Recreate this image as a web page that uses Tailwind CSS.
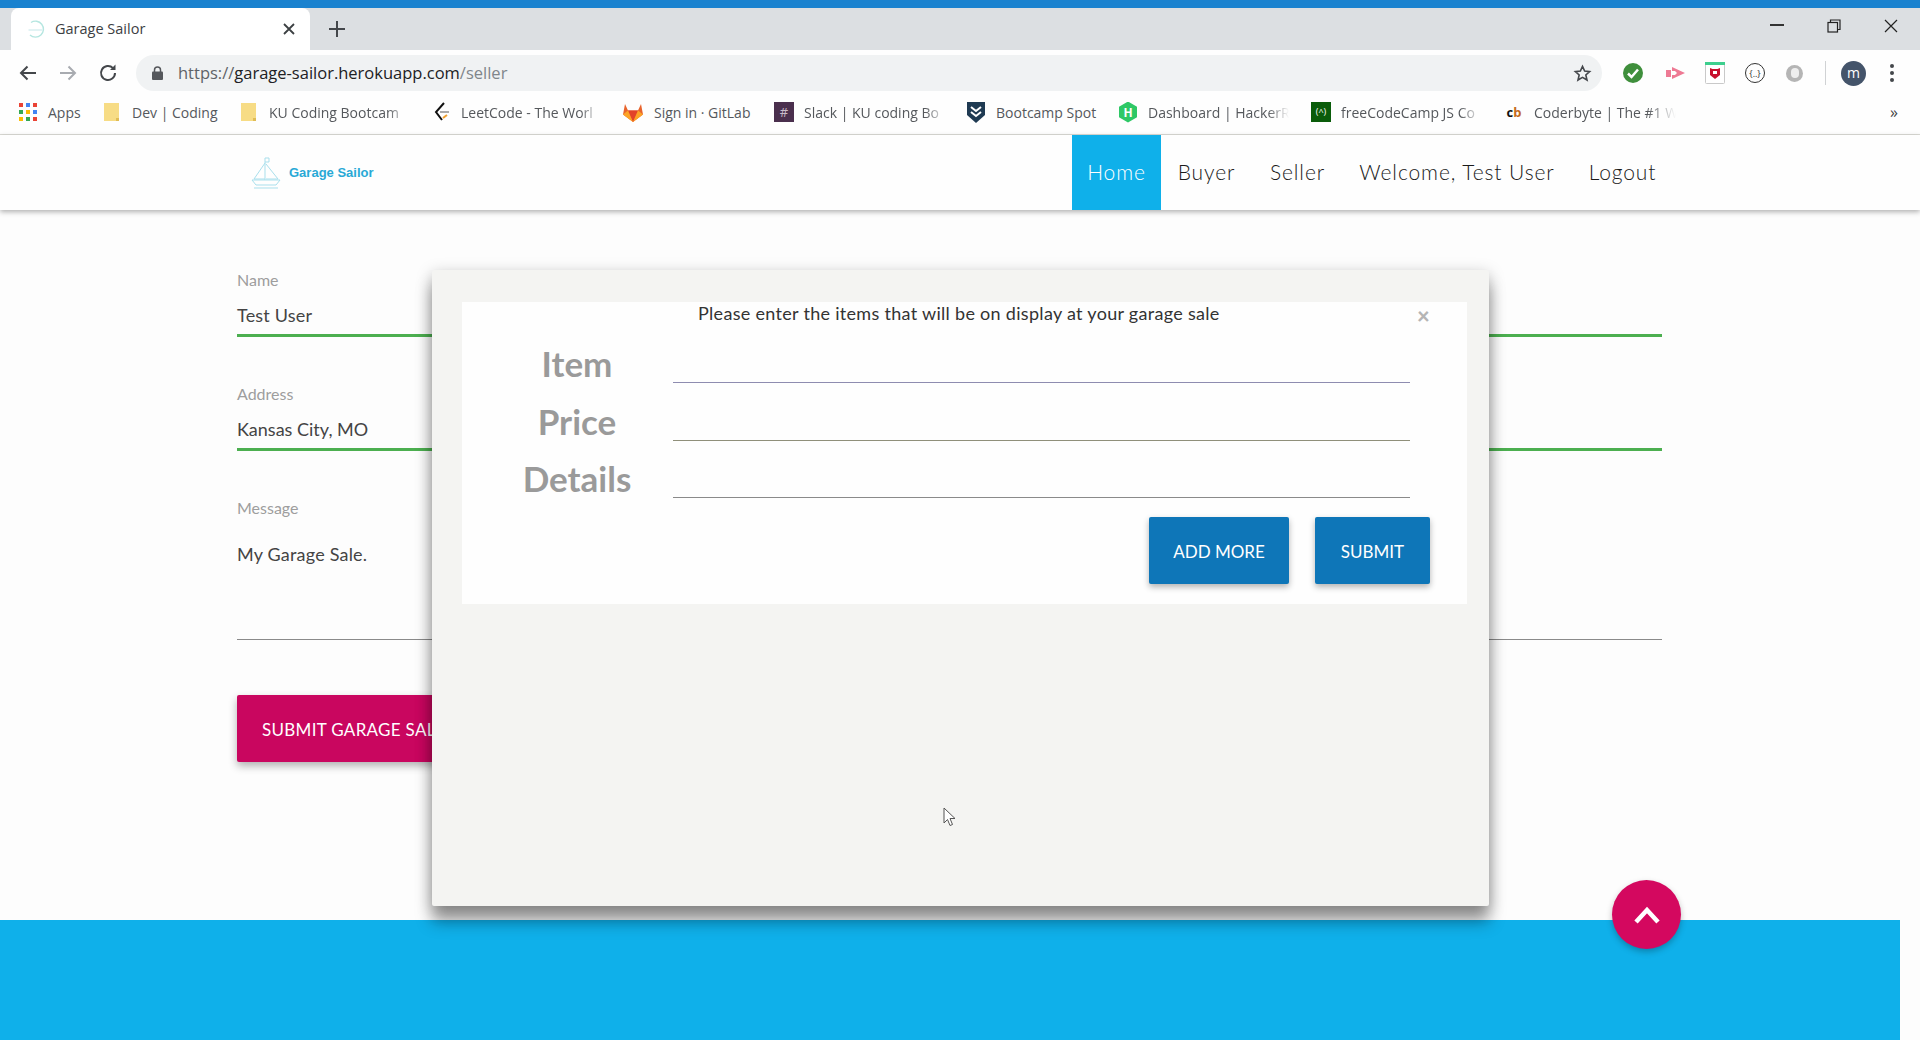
<!DOCTYPE html>
<html lang="en">
<head>
  <meta charset="UTF-8">
  <title>Garage Sailor</title>
  <script src="https://cdn.jsdelivr.net/npm/@tailwindcss/browser@4"></script>
</head>
<body class="bg-[#fdfdfd] font-['Lato','Open_Sans',sans-serif]">
<div class="relative w-[1920px] h-[1040px] overflow-hidden flex flex-col">

  <!-- browser chrome -->
  <div class="h-2 bg-[#1a82cf]"></div>
  <div class="h-[42px] bg-[#dcdfe2] flex items-end pl-[11px] font-['Open_Sans',sans-serif]">
    <div class="w-[299px] h-[42px] bg-white rounded-t-lg flex items-center pl-[15px] pr-[14px]">
      <svg class="w-[20px] h-[20px]" viewBox="0 0 20 20" fill="none" stroke="#b5e6e0" stroke-width="1.4"><path d="M5 3.5a8 8 0 1 1-1 12.5"/><path d="M2.5 11h14" stroke="#d6eef0"/></svg>
      <span class="ml-[9px] text-[14.5px] text-[#3c4043]">Garage Sailor</span>
      <svg class="ml-auto w-[14px] h-[14px]" viewBox="0 0 14 14" stroke="#3c4043" stroke-width="1.8"><path d="M2 2l10 10M12 2L2 12"/></svg>
    </div>
    <svg class="ml-[18px] mb-[12px] w-[18px] h-[18px]" viewBox="0 0 18 18" stroke="#44474b" stroke-width="2"><path d="M9 1v16M1 9h16"/></svg>
    <svg class="ml-auto mb-[24px] w-[14px] h-[2px]" viewBox="0 0 14 2" stroke="#333" stroke-width="2"><path d="M0 1h14"/></svg>
    <svg class="ml-[43px] mb-[17px] w-[14px] h-[14px]" viewBox="0 0 14 14" fill="none" stroke="#222" stroke-width="1.2"><rect x="1" y="3.5" width="9.5" height="9.5"/><path d="M3.5 3.500V1h9.500v9.500h-2.500"/></svg>
    <svg class="ml-[43px] mr-[22px] mb-[17px] w-[14px] h-[14px]" viewBox="0 0 14 14" stroke="#222" stroke-width="1.2"><path d="M1 1l12 12M13 1L1 13"/></svg>
  </div>
  <div class="h-[46px] bg-[#fefefe] flex items-center pl-[18px] font-['Open_Sans',sans-serif]">
    <svg class="w-[20px] h-[20px]" viewBox="0 0 20 20" fill="none" stroke="#44474b" stroke-width="2"><path d="M18 10H3M9.500 3.500L3 10l6.500 6.500"/></svg>
    <svg class="ml-[20px] w-[20px] h-[20px]" viewBox="0 0 20 20" fill="none" stroke="#a8abb0" stroke-width="2"><path d="M2 10h15M10.500 3.500L17 10l-6.500 6.500"/></svg>
    <svg class="ml-[20px] w-[20px] h-[20px]" viewBox="0 0 20 20" fill="none" stroke="#44474b" stroke-width="2"><path d="M17 10a7 7 0 1 1-2-4.900"/><path d="M17.500 1.500v5.500h-5.500z" fill="#44474b" stroke="none"/></svg>
    <div class="ml-[18px] w-[1466px] h-[36px] bg-[#f0f2f3] rounded-full flex items-center pl-[16px] pr-[10px]">
      <svg class="w-[11px] h-[14px]" viewBox="0 0 11 14"><path d="M2.500 6V4a3 3 0 0 1 6 0v2" fill="none" stroke="#55585c" stroke-width="1.500"/><rect y="5.500" width="11" height="8.500" rx="1" fill="#55585c"/></svg>
      <span class="ml-[15px] text-[16.500px] text-[#202124]"><span class="text-[#5f6368]">https://</span>garage-sailor.herokuapp.com<span class="text-[#80868b]">/seller</span></span>
      <svg class="ml-auto w-[19px] h-[19px]" viewBox="0 0 24 24" fill="none" stroke="#44474b" stroke-width="2"><path d="M12 3l2.700 6 6.300.6-4.800 4.200 1.500 6.400L12 16.800 6.300 20.200l1.500-6.400L3 9.600 9.300 9z"/></svg>
    </div>
    <svg class="ml-[21px] w-[20px] h-[20px]" viewBox="0 0 20 20"><circle cx="10" cy="10" r="10" fill="#3f8f3c"/><path d="M5 10.500l3.500 3.500L15 6.500" fill="none" stroke="#fff" stroke-width="2.500"/></svg>
    <svg class="ml-[23px] w-[20px] h-[18px]" viewBox="0 0 20 18" fill="#ee7a94"><rect y="6" width="5" height="7"/><path d="M6 3l13 6-13 6V11h3l2-2-2-2H6z"/></svg>
    <svg class="ml-[19px] w-[20px] h-[22px]" viewBox="0 0 20 22"><rect x=".5" y=".5" width="19" height="21" rx="1" fill="#fff" stroke="#c9c9c9"/><rect width="20" height="3" fill="#3ecf8e"/><path d="M5 6l2.500 1h5L15 6v7l-5 4-5-4z" fill="#c8102e"/><path d="M8 9h4v3H8z" fill="#fff"/></svg>
    <div class="ml-[20px] w-[20px] h-[20px] rounded-full border-[1.500px] border-[#333] flex items-center justify-center text-[9px] leading-none text-[#333]">{..}</div>
    <div class="ml-[21px] w-[17px] h-[17px] rounded-full bg-[#b5b5b5] flex items-center justify-center"><div class="w-[8px] h-[10px] rounded-full bg-[#eee]"></div></div>
    <div class="ml-[22px] w-px h-[24px] bg-[#d0d2d4]"></div>
    <div class="ml-[15px] w-[25px] h-[25px] rounded-full bg-[#44546a] flex items-center justify-center text-[14px] leading-none text-white">m</div>
    <svg class="ml-[24px] w-[4px] h-[18px]" viewBox="0 0 4 18" fill="#44474b"><circle cx="2" cy="2" r="2"/><circle cx="2" cy="9" r="2"/><circle cx="2" cy="16" r="2"/></svg>
  </div>
  <div class="h-[39px] pb-[6px] bg-[#fefefe] border-b border-[#dcdcd6] flex items-center text-[14px] text-[#55585c] font-['Open_Sans',sans-serif]">
    <svg class="ml-[19px] w-[18px] h-[18px]" viewBox="0 0 18 18">
      <rect width="4" height="4" fill="#ea4335"/><rect x="7" width="4" height="4" fill="#4285f4"/><rect x="14" width="4" height="4" fill="#ea4335"/>
      <rect y="7" width="4" height="4" fill="#34a853"/><rect x="7" y="7" width="4" height="4" fill="#fbbc05"/><rect x="14" y="7" width="4" height="4" fill="#4285f4"/>
      <rect y="14" width="4" height="4" fill="#fbbc05"/><rect x="7" y="14" width="4" height="4" fill="#34a853"/><rect x="14" y="14" width="4" height="4" fill="#ea4335"/>
    </svg>
    <span class="ml-[11px] w-[56px]">Apps</span>
    <svg class="w-[15px] h-[18px]" viewBox="0 0 15 18"><path d="M0 0h15v18H0z" fill="#f7dc85"/><path d="M12 15h3v3h-3z" fill="#e0bc55"/></svg>
    <span class="ml-[13px] w-[109px]">Dev | Coding</span>
    <svg class="w-[15px] h-[18px]" viewBox="0 0 15 18"><path d="M0 0h15v18H0z" fill="#f7dc85"/><path d="M12 15h3v3h-3z" fill="#e0bc55"/></svg>
    <span class="ml-[13px] w-[140px] whitespace-nowrap [mask-image:linear-gradient(to_right,#000_85%,transparent)]">KU Coding Bootcam</span>
    <svg class="ml-[24px] w-[18px] h-[20px]" viewBox="0 0 18 20" fill="none" stroke-width="2"><path d="M11 1L3 10l6 8" stroke="#111"/><path d="M7 10h9" stroke="#aaa"/><path d="M10 16l4-3" stroke="#f0a030"/></svg>
    <span class="ml-[10px] w-[140px] whitespace-nowrap [mask-image:linear-gradient(to_right,#000_85%,transparent)]">LeetCode - The Worl</span>
    <svg class="ml-[22px] w-[20px] h-[19px]" viewBox="0 0 20 19"><path d="M10 19L0 11.500 2 1l3 6.500h10L18 1l2 10.500z" fill="#e8642c"/><path d="M10 19L5 7.500h10z" fill="#e24329"/><path d="M0 11.500L5 7.500 10 19zM20 11.500L15 7.500 10 19z" fill="#fca326"/></svg>
    <span class="ml-[11px] w-[120px] whitespace-nowrap">Sign in · GitLab</span>
    <div class="w-[20px] h-[20px] bg-[#4a2f4d] text-[#c9bcc9] text-[13px] leading-[20px] text-center">#</div>
    <span class="ml-[10px] w-[142px] whitespace-nowrap [mask-image:linear-gradient(to_right,#000_85%,transparent)]">Slack | KU coding Bo</span>
    <svg class="ml-[21px] w-[18px] h-[21px]" viewBox="0 0 18 21"><path d="M0 0h18v13l-9 8-9-8z" fill="#1f3a52"/><path d="M4 5l5 4 5-4M4 10l5 4 5-4" fill="none" stroke="#fff" stroke-width="2"/></svg>
    <span class="ml-[11px] w-[123px] whitespace-nowrap">Bootcamp Spot</span>
    <div class="w-[18px] h-[21px] bg-[#2ec866] text-white text-[12px] leading-[21px] font-bold text-center [clip-path:polygon(50%_0,100%_25%,100%_75%,50%_100%,0_75%,0_25%)]">H</div>
    <span class="ml-[11px] w-[141px] whitespace-nowrap [mask-image:linear-gradient(to_right,#000_85%,transparent)]">Dashboard | HackerR</span>
    <div class="ml-[22px] w-[20px] h-[20px] bg-[#0a5c0a] text-white text-[9px] leading-[20px] text-center">(^)</div>
    <span class="ml-[10px] w-[140px] whitespace-nowrap [mask-image:linear-gradient(to_right,#000_85%,transparent)]">freeCodeCamp JS Co</span>
    <div class="ml-[25px] w-[16px] text-[13px] font-bold leading-none text-[#111] text-center">c<span class="text-[#c46a1c]">b</span></div>
    <span class="ml-[12px] w-[142px] whitespace-nowrap [mask-image:linear-gradient(to_right,#000_80%,transparent)]">Coderbyte | The #1 W</span>
    <span class="ml-auto mr-[22px] text-[16px] leading-none text-[#444]">»</span>
  </div>

  <!-- site nav -->
  <header class="relative h-[75px] bg-[#fefefe] shadow-[0_2px_5px_rgba(0,0,0,0.3)] flex items-center pl-[251px] pr-[246px]">
    <svg class="w-[30px] h-[32px]" viewBox="0 0 30 32" fill="none" stroke="#a9dfec" stroke-width="1"><path d="M14 1v22M14 1h4v4h-4M14 6L3 22h11M15 7l12 15H15M1 23h28l-4 5H5zM3 31h24"/></svg>
    <span class="ml-[8px] font-['Liberation_Sans',sans-serif] text-[13px] font-bold text-[#29a9d6]">Garage Sailor</span>
    <nav class="ml-auto h-full flex items-stretch text-[21px] tracking-[0.9px] font-light text-[#1a1a1a]">
      <a class="w-[89px] pb-[2px] bg-[#0fb0ea] text-white flex items-center justify-center">Home</a>
      <a class="w-[91px] pb-[2px] flex items-center justify-center">Buyer</a>
      <a class="w-[91px] pb-[2px] flex items-center justify-center">Seller</a>
      <a class="w-[228px] pb-[2px] flex items-center justify-center">Welcome, Test User</a>
      <a class="w-[103px] pb-[2px] flex items-center justify-center">Logout</a>
    </nav>
  </header>

  <!-- seller form, mostly covered by the modal -->
  <main class="flex-1 pl-[237px] pr-[258px] pt-[60px]">
    <label class="block text-[16px] leading-[20px] text-[#9e9e9e]">Name</label>
    <div class="mt-[10px] h-[37px] border-b-[3px] border-[#4caf50] text-[18px] tracking-[0.2px] leading-[30px] text-[#444]">Test User</div>
    <label class="block mt-[47px] text-[16px] leading-[20px] text-[#9e9e9e]">Address</label>
    <div class="mt-[10px] h-[37px] border-b-[3px] border-[#4caf50] text-[18px] leading-[30px] text-[#444]">Kansas City, MO</div>
    <label class="block mt-[47px] text-[16px] leading-[20px] text-[#9e9e9e]">Message</label>
    <div class="mt-[21px] h-[101px] border-b border-[#8a8a8a] text-[18px] tracking-[0.2px] leading-[30px] text-[#444]">My Garage Sale.</div>
    <button class="block mt-[55px] w-[320px] h-[67px] pl-[25px] pt-[2px] text-left bg-[#c9065f] text-white text-[17px] tracking-[0.3px] rounded-[2px] shadow-[0_4px_8px_rgba(0,0,0,0.3)]">SUBMIT GARAGE SALE</button>
  </main>

  <footer class="h-[120px] w-[1900px] bg-[#0fb0ea]"></footer>

  <!-- modal -->
  <div class="absolute left-[432px] top-[270px] w-[1057px] h-[636px] bg-[#f4f4f2] pt-[32px] pl-[30px] pr-[22px] rounded-[2px] shadow-[0_16px_16px_rgba(0,0,0,0.35),0_4px_16px_rgba(0,0,0,0.25)]">
    <div class="relative h-[302px] bg-[#fefefe] pl-[211px] pr-[57px]">
      <p class="absolute left-[236px] -top-[2px] text-[18px] tracking-[0.3px] leading-[26px] text-[#333]">Please enter the items that will be on display at your garage sale</p>
      <span class="absolute left-[955px] top-[2px] text-[22px] leading-[24px] font-black text-[#b5b5b5]">×</span>
      <div class="pt-[26px]">
        <div class="relative h-[55px] border-b border-[#8e8cb0]"><span class="absolute -left-[196px] w-[200px] text-center top-[15px] text-[35px] leading-[40px] font-bold text-[#9a9a9a]">Item</span></div>
        <div class="relative h-[58px] border-b border-[#8f8f7a]"><span class="absolute -left-[196px] w-[200px] text-center top-[18px] text-[35px] leading-[40px] font-bold text-[#9a9a9a]">Price</span></div>
        <div class="relative h-[57px] border-b border-[#8a8a8a]"><span class="absolute -left-[196px] w-[200px] text-center top-[17px] text-[35px] leading-[40px] font-bold text-[#9a9a9a]">Details</span></div>
      </div>
      <div class="mt-[19px] -mr-[20px] flex justify-end gap-[26px]">
        <button class="w-[140px] h-[67px] pt-[2px] bg-[#0e76b8] text-white text-[17px] rounded-[2px] shadow-[0_3px_6px_rgba(0,0,0,0.3)]">ADD MORE</button>
        <button class="w-[115px] h-[67px] pt-[2px] bg-[#0e76b8] text-white text-[17px] rounded-[2px] shadow-[0_3px_6px_rgba(0,0,0,0.3)]">SUBMIT</button>
      </div>
    </div>
    <svg class="absolute left-[511px] top-[537px] w-[13px] h-[20px]" viewBox="0 0 13 20" fill="#fff" stroke="#555" stroke-width="1"><path d="M1 1v15l3.500-3.500 2.500 6 2.500-1-2.500-6h5z"/></svg>
  </div>

  <!-- back to top -->
  <button class="absolute left-[1612px] top-[880px] w-[69px] h-[69px] rounded-full bg-[#d4085f] shadow-[0_3px_6px_rgba(0,0,0,0.25)] flex items-center justify-center">
    <svg class="w-[26px] h-[18px]" viewBox="0 0 26 18" fill="none" stroke="#fff" stroke-width="4.500"><path d="M2 16L13 4l11 12"/></svg>
  </button>
</div>
</body>
</html>
